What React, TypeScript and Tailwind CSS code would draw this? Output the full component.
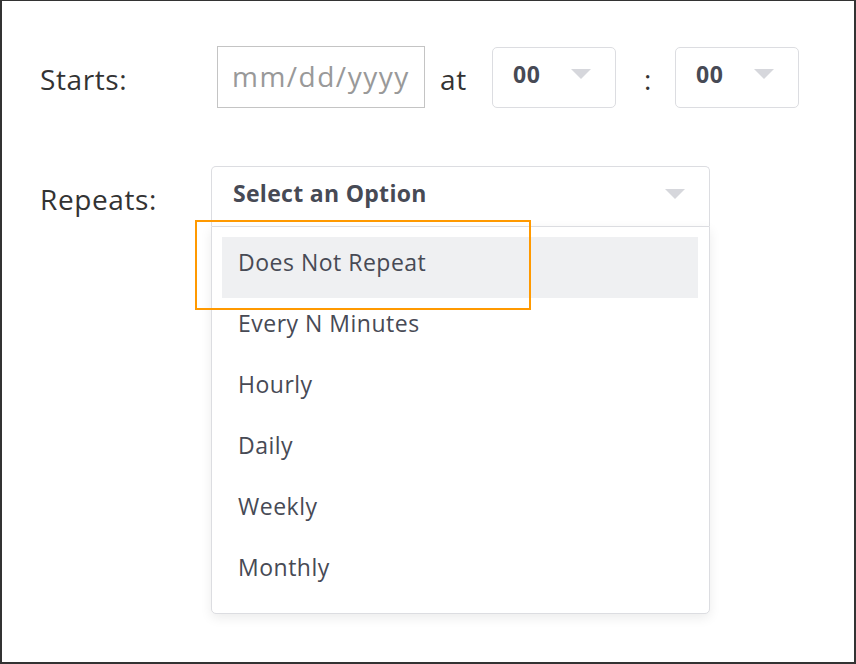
import { useState } from 'react'

const options = ['Does Not Repeat', 'Every N Minutes', 'Hourly', 'Daily', 'Weekly', 'Monthly']

function Caret() {
  return (
    <svg width="20" height="10" viewBox="0 0 20 10" className="shrink-0">
      <path d="M0 0 L20 0 L10 10 Z" fill="#d6d7dc" />
    </svg>
  )
}

function TimeSelect({ value }: { value: string }) {
  return (
    <div className="w-[124px] h-[61px] border border-[#dcdde1] rounded-[5px] flex items-center justify-between pl-5 pr-6 pb-1.5">
      <span className="text-[23px] font-bold text-[#474a55] tracking-[0.5px]">{value}</span>
      <Caret />
    </div>
  )
}

export default function App() {
  const [active] = useState(0)

  return (
    <div
      className="w-[856px] h-[664px] bg-white border-[#333] border-t border-l-2 border-r-2 border-b-2 relative overflow-hidden"
      style={{ fontFamily: '"Open Sans", "Noto Sans", sans-serif' }}
    >
      <div className="flex items-center pt-[45px] pl-[38px]">
        <span className="w-[177px] text-[28px] text-[#333] tracking-[0.6px] pt-1">Starts:</span>
        <div className="w-[208px] h-[62px] border border-[#c4c4c4] flex items-center pl-[14px] pb-0.5">
          <span className="text-[28px] text-[#999] tracking-[1.5px]">mm/dd/yyyy</span>
        </div>
        <span className="w-[67px] pl-[15px] text-[28px] text-[#333] tracking-[0.6px] pt-1">at</span>
        <TimeSelect value="00" />
        <span className="w-[59px] pl-[28px] text-[28px] text-[#333] pt-1">:</span>
        <TimeSelect value="00" />
      </div>

      <div className="flex items-start pt-[58px] pl-[38px]">
        <span className="w-[171px] text-[28px] text-[#333] tracking-[0.6px] pt-[12px]">Repeats:</span>
        <div className="relative w-[499px]">
          <div className="h-[60px] border border-[#dcdde1] rounded-t-[5px] border-b-0 flex items-center justify-between pl-[21px] pr-6 pb-1.5">
            <span className="text-[23px] font-bold text-[#474a55] tracking-[0.3px]">Select an Option</span>
            <Caret />
          </div>
          <div className="absolute left-0 top-[60px] w-full bg-white border border-[#dcdde1] rounded-b-[5px] shadow-[0_4px_12px_rgba(0,0,0,0.08)] pt-[10px] pb-[10px] pl-[10px] pr-[11px]">
            {options.map((o, i) => (
              <div
                key={o}
                className={
                  'h-[61px] flex items-center pl-4 pb-2.5 text-[23px] text-[#474a55] tracking-[0.5px] ' +
                  (i === active ? 'bg-[#eff0f2] h-[60px]' : '')
                }
              >
                {o}
              </div>
            ))}
          </div>
          <div className="absolute left-[-16px] top-[54px] w-[336px] h-[90px] border-2 border-[#ff9900]" />
        </div>
      </div>
    </div>
  )
}
